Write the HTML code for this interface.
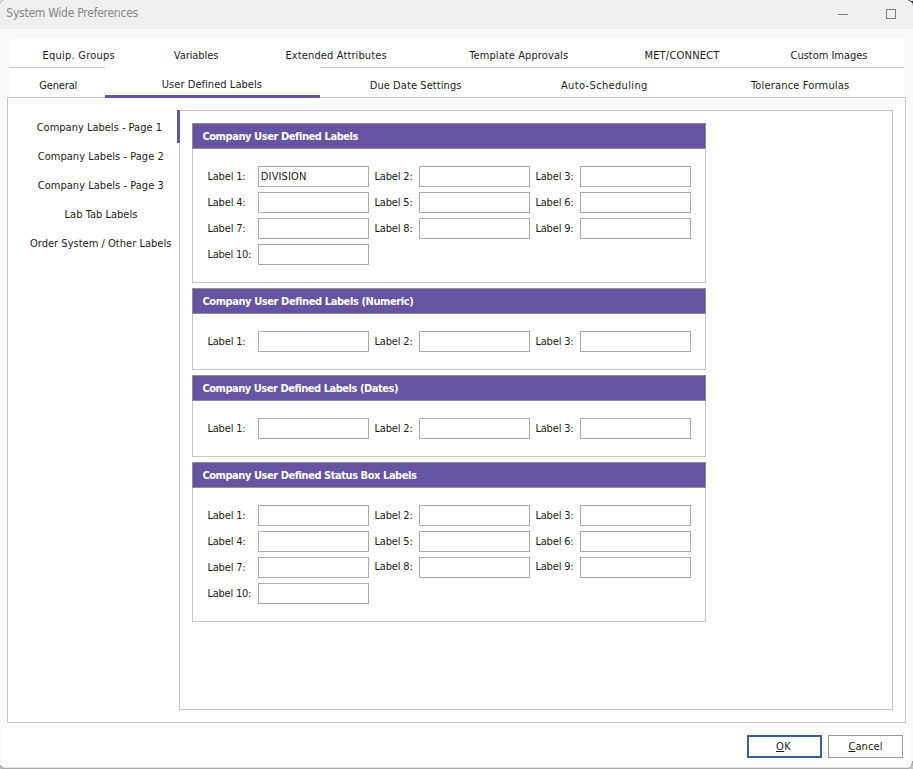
<!DOCTYPE html>
<html><head><meta charset="utf-8"><title>System Wide Preferences</title>
<style>
html,body{margin:0;padding:0}
body{width:913px;height:769px;overflow:hidden;background:#f8f9fb;position:relative;font-family:"DejaVu Sans Condensed","Liberation Sans",sans-serif;font-size:11px;color:#1c1c1c}
.a{position:absolute}
.t{position:absolute;white-space:nowrap;line-height:14px;height:14px;transform-origin:0 0}
.b{font-weight:bold;color:#fff}
.in{position:absolute;width:109px;height:19px;border:1px solid #ababab;background:#fff}
.gh{position:absolute;left:192px;width:512px;height:24px;border:1px solid #8f8f8f;background:#6654a3}
.gb{position:absolute;left:192px;width:512px;border:1px solid #c6c6c6;border-top:none;background:#fff}
u{text-decoration:underline;text-underline-offset:1px}
</style></head><body>

<div class="a" style="left:0;top:0;width:913px;height:29px;background:#f0f0f0"></div>
<div class="a" style="left:838px;top:14px;width:10px;height:1px;background:#7f7f7f"></div>
<div class="a" style="left:886px;top:9px;width:8px;height:8px;border:1px solid #7f7f7f"></div>
<div class="a" style="left:9px;top:39px;width:895px;height:59px;background:#fff"></div>
<div class="a" style="left:9px;top:67px;width:96px;height:1px;background:#c6c6c6"></div>
<div class="a" style="left:320px;top:67px;width:584px;height:1px;background:#c6c6c6"></div>
<div class="a" style="left:7px;top:97px;width:897px;height:624px;border:1px solid #c6c6c6;background:#fff;outline:1px solid #fdfdfe"></div>
<div class="a" style="left:105px;top:95px;width:215px;height:3px;background:#6654a3"></div>
<div class="a" style="left:179px;top:110px;width:712px;height:598px;border:1px solid #c6c6c6;background:#fff"></div>
<div class="a" style="left:177px;top:110px;width:3px;height:33px;background:#6654a3"></div>
<div class="gb" style="top:149px;height:133px"></div>
<div class="gh" style="top:123px"></div>
<div class="in" style="left:258px;top:166px"></div>
<div class="in" style="left:419px;top:166px"></div>
<div class="in" style="left:580px;top:166px"></div>
<div class="in" style="left:258px;top:192px"></div>
<div class="in" style="left:419px;top:192px"></div>
<div class="in" style="left:580px;top:192px"></div>
<div class="in" style="left:258px;top:218px"></div>
<div class="in" style="left:419px;top:218px"></div>
<div class="in" style="left:580px;top:218px"></div>
<div class="in" style="left:258px;top:244px"></div>
<div class="gb" style="top:314px;height:55px"></div>
<div class="gh" style="top:288px"></div>
<div class="in" style="left:258px;top:331px"></div>
<div class="in" style="left:419px;top:331px"></div>
<div class="in" style="left:580px;top:331px"></div>
<div class="gb" style="top:401px;height:55px"></div>
<div class="gh" style="top:375px"></div>
<div class="in" style="left:258px;top:418px"></div>
<div class="in" style="left:419px;top:418px"></div>
<div class="in" style="left:580px;top:418px"></div>
<div class="gb" style="top:488px;height:133px"></div>
<div class="gh" style="top:462px"></div>
<div class="in" style="left:258px;top:505px"></div>
<div class="in" style="left:419px;top:505px"></div>
<div class="in" style="left:580px;top:505px"></div>
<div class="in" style="left:258px;top:531px"></div>
<div class="in" style="left:419px;top:531px"></div>
<div class="in" style="left:580px;top:531px"></div>
<div class="in" style="left:258px;top:557px"></div>
<div class="in" style="left:419px;top:557px"></div>
<div class="in" style="left:580px;top:557px"></div>
<div class="in" style="left:258px;top:583px"></div>
<div class="a" style="left:2px;top:728px;width:908px;height:37px;background:#fff;border-radius:0 0 4px 4px"></div>
<div class="a" style="left:747px;top:735px;width:71px;height:19px;border:2px solid #3d5f98;background:#fff"></div>
<div class="a" style="left:828px;top:735px;width:73px;height:21px;border:1px solid #999;background:#fff"></div>
<div class="a" style="left:0;top:767px;width:913px;height:1px;background:#e6e6e8"></div>
<div class="a" style="left:0;top:768px;width:913px;height:1px;background:#a8a8a8"></div>
<div class="a" style="left:0px;top:0px;width:1px;height:1px;background:#e6e6e6"></div>
<div class="a" style="left:1px;top:0px;width:2px;height:1px;background:#c4c4c4"></div>
<div class="a" style="left:3px;top:0px;width:1px;height:1px;background:#dedede"></div>
<div class="a" style="left:0px;top:1px;width:1px;height:2px;background:#c4c4c4"></div>
<div class="a" style="left:0px;top:3px;width:1px;height:1px;background:#e0e0e0"></div>
<div class="a" style="left:1px;top:1px;width:1px;height:1px;background:#dcdcdc"></div>
<div class="a" style="left:908px;top:0px;width:1px;height:1px;background:#a8a6ae"></div>
<div class="a" style="left:909px;top:0px;width:1px;height:1px;background:#3d3850"></div>
<div class="a" style="left:910px;top:0px;width:3px;height:1px;background:#cfe0fb"></div>
<div class="a" style="left:910px;top:1px;width:1px;height:1px;background:#8a8694"></div>
<div class="a" style="left:911px;top:1px;width:2px;height:1px;background:#372f4c"></div>
<div class="a" style="left:911px;top:2px;width:1px;height:1px;background:#b4b2ba"></div>
<div class="a" style="left:912px;top:2px;width:1px;height:1px;background:#3f3955"></div>
<div class="a" style="left:912px;top:3px;width:1px;height:1px;background:#9aa3b4"></div>
<div class="a" style="left:912px;top:4px;width:1px;height:1px;background:#b6bcc8"></div>
<div class="a" style="left:912px;top:5px;width:1px;height:1px;background:#d6d9df"></div>
<div class="a" style="left:912px;top:6px;width:1px;height:1px;background:#e6e7ea"></div>
<div class="a" style="left:0px;top:765px;width:1px;height:1px;background:#b4b4b4"></div>
<div class="a" style="left:0px;top:766px;width:1px;height:3px;background:#bcbcbc"></div>
<div class="a" style="left:1px;top:766px;width:1px;height:1px;background:#a2a2a2"></div>
<div class="a" style="left:1px;top:767px;width:1px;height:2px;background:#b4b4b4"></div>
<div class="a" style="left:2px;top:767px;width:1px;height:1px;background:#a2a2a2"></div>
<div class="a" style="left:2px;top:768px;width:1px;height:1px;background:#b0b0b0"></div>
<div class="a" style="left:906px;top:761px;width:7px;height:8px;background:#c2c2c2"><div style="width:7px;height:8px;box-sizing:border-box;border-right:1px solid #9c9c9c;background:linear-gradient(#f8f9fb 0,#f8f9fb 6px,#e6e6e8 6px,#e6e6e8 7px,#a8a8a8 7px);border-bottom-right-radius:7px 8px"></div></div>
<div class="t" style="left:6.3px;top:6px;letter-spacing:-0.254px;font-size:12px;color:#868686">System Wide Preferences</div>
<div class="t" style="left:42.5px;top:49px;letter-spacing:0.239px">Equip. Groups</div>
<div class="t" style="left:173.8px;top:49px;letter-spacing:-0.071px">Variables</div>
<div class="t" style="left:285.5px;top:49px;letter-spacing:0.117px">Extended Attributes</div>
<div class="t" style="left:469.2px;top:49px;letter-spacing:0.102px">Template Approvals</div>
<div class="t" style="left:644.4px;top:49px;letter-spacing:0.210px">MET/CONNECT</div>
<div class="t" style="left:790.5px;top:49px;letter-spacing:-0.017px">Custom Images</div>
<div class="t" style="left:39.2px;top:79px;letter-spacing:-0.145px">General</div>
<div class="t" style="left:161.8px;top:78px;letter-spacing:0.048px">User Defined Labels</div>
<div class="t" style="left:369.7px;top:79px;letter-spacing:0.075px">Due Date Settings</div>
<div class="t" style="left:561.0px;top:79px;letter-spacing:0.350px">Auto-Scheduling</div>
<div class="t" style="left:751.0px;top:79px;letter-spacing:0.169px">Tolerance Formulas</div>
<div class="t" style="left:36.7px;top:121px;letter-spacing:0.000px">Company Labels - Page 1</div>
<div class="t" style="left:37.7px;top:150px;letter-spacing:0.035px">Company Labels - Page 2</div>
<div class="t" style="left:37.7px;top:179px;letter-spacing:0.035px">Company Labels - Page 3</div>
<div class="t" style="left:64.6px;top:208px;letter-spacing:0.016px">Lab Tab Labels</div>
<div class="t" style="left:30.0px;top:237px;letter-spacing:0.019px">Order System / Other Labels</div>
<div class="t b" style="left:202.4px;top:130px;letter-spacing:-0.421px">Company User Defined Labels</div>
<div class="t b" style="left:202.4px;top:295px;letter-spacing:-0.409px">Company User Defined Labels (Numeric)</div>
<div class="t b" style="left:202.4px;top:382px;letter-spacing:-0.460px">Company User Defined Labels (Dates)</div>
<div class="t b" style="left:202.4px;top:469px;letter-spacing:-0.442px">Company User Defined Status Box Labels</div>
<div class="t" style="left:207.4px;top:170px;letter-spacing:-0.173px">Label 1:</div>
<div class="t" style="left:374.5px;top:170px;letter-spacing:-0.173px">Label 2:</div>
<div class="t" style="left:535.4px;top:170px;letter-spacing:-0.173px">Label 3:</div>
<div class="t" style="left:207.4px;top:196px;letter-spacing:-0.173px">Label 4:</div>
<div class="t" style="left:374.5px;top:196px;letter-spacing:-0.173px">Label 5:</div>
<div class="t" style="left:535.4px;top:196px;letter-spacing:-0.173px">Label 6:</div>
<div class="t" style="left:207.4px;top:222px;letter-spacing:-0.173px">Label 7:</div>
<div class="t" style="left:374.5px;top:222px;letter-spacing:-0.173px">Label 8:</div>
<div class="t" style="left:535.4px;top:222px;letter-spacing:-0.173px">Label 9:</div>
<div class="t" style="left:207.4px;top:248px;letter-spacing:-0.220px">Label 10:</div>
<div class="t" style="left:207.4px;top:335px;letter-spacing:-0.173px">Label 1:</div>
<div class="t" style="left:374.5px;top:335px;letter-spacing:-0.173px">Label 2:</div>
<div class="t" style="left:535.4px;top:335px;letter-spacing:-0.173px">Label 3:</div>
<div class="t" style="left:207.4px;top:422px;letter-spacing:-0.173px">Label 1:</div>
<div class="t" style="left:374.5px;top:422px;letter-spacing:-0.173px">Label 2:</div>
<div class="t" style="left:535.4px;top:422px;letter-spacing:-0.173px">Label 3:</div>
<div class="t" style="left:207.4px;top:509px;letter-spacing:-0.173px">Label 1:</div>
<div class="t" style="left:374.5px;top:509px;letter-spacing:-0.173px">Label 2:</div>
<div class="t" style="left:535.4px;top:509px;letter-spacing:-0.173px">Label 3:</div>
<div class="t" style="left:207.4px;top:535px;letter-spacing:-0.173px">Label 4:</div>
<div class="t" style="left:374.5px;top:535px;letter-spacing:-0.173px">Label 5:</div>
<div class="t" style="left:535.4px;top:535px;letter-spacing:-0.173px">Label 6:</div>
<div class="t" style="left:207.4px;top:561px;letter-spacing:-0.173px">Label 7:</div>
<div class="t" style="left:374.5px;top:560px;letter-spacing:-0.173px">Label 8:</div>
<div class="t" style="left:535.4px;top:560px;letter-spacing:-0.173px">Label 9:</div>
<div class="t" style="left:207.4px;top:587px;letter-spacing:-0.220px">Label 10:</div>
<div class="t" style="left:260.8px;top:170px;letter-spacing:0.147px">DIVISION</div>
<div class="t" style="left:776.0px;top:740px;letter-spacing:0.459px"><u>O</u>K</div>
<div class="t" style="left:848.4px;top:740px;letter-spacing:0.109px"><u>C</u>ancel</div>
</body></html>
